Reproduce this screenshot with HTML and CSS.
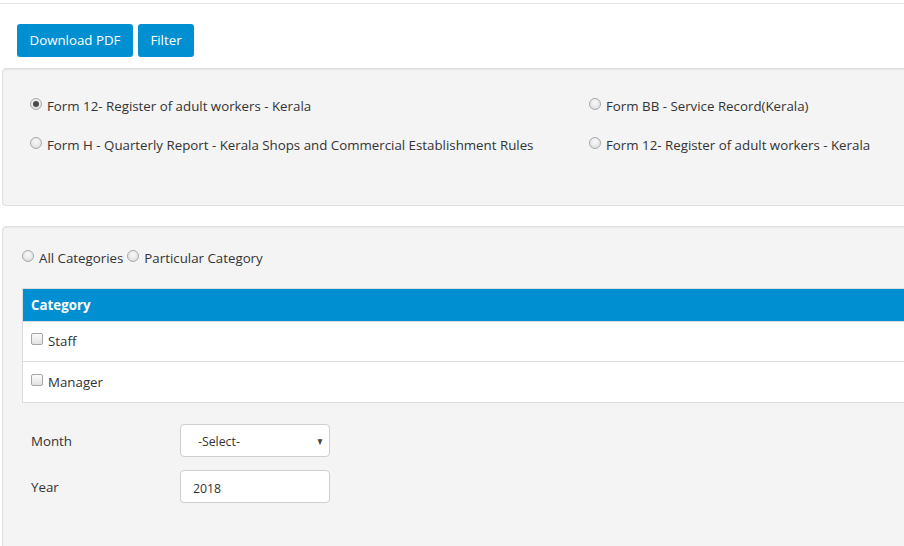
FILE: index.html
```html
<!DOCTYPE html>
<html>
<head>
<meta charset="utf-8">
<link rel="stylesheet" href="styles.css">
</head>
<body>
<div class="topbar"></div>
<div class="actions">
  <button class="btn">Download PDF</button>
  <button class="btn">Filter</button>
</div>
<div class="panel forms">
  <div class="form-grid">
    <label class="opt"><span class="radio checked"></span>Form 12- Register of adult workers - Kerala</label>
    <label class="opt"><span class="radio"></span>Form BB - Service Record(Kerala)</label>
    <label class="opt"><span class="radio"></span>Form H - Quarterly Report - Kerala Shops and Commercial Establishment Rules</label>
    <label class="opt"><span class="radio"></span>Form 12- Register of adult workers - Kerala</label>
  </div>
</div>
<div class="panel cats">
  <div class="cat-choice">
    <label class="opt small"><span class="radio"></span>All Categories</label>
    <label class="opt small"><span class="radio"></span>Particular Category</label>
  </div>
  <div class="table">
    <div class="thead">Category</div>
    <div class="row"><span class="check"></span>Staff</div>
    <div class="row"><span class="check"></span>Manager</div>
  </div>
  <div class="fields">
    <div class="field">
      <span class="flabel">Month</span>
      <div class="control select"><span>-Select-</span><span class="caret">&#9660;</span></div>
    </div>
    <div class="field">
      <span class="flabel">Year</span>
      <div class="control input">2018</div>
    </div>
  </div>
</div>
</body>
</html>
```
FILE: styles.css
```css
* { box-sizing: border-box; }
html, body { margin: 0; padding: 0; background: #fff; }
body {
  font-family: "Open Sans", "Segoe UI", sans-serif;
  font-size: 13.3px;
  color: #333;
  width: 904px;
  height: 546px;
  overflow: hidden;
}
.topbar { height: 4px; border-bottom: 1px solid #e6e6e6; }
.actions {
  display: flex;
  gap: 5px;
  padding: 20px 0 0 17px;
  height: 64px;
}
.btn {
  font-family: inherit;
  font-size: 13.3px;
  color: #fff;
  background: #0090d1;
  border: 0;
  border-radius: 3px;
  height: 33px;
  padding: 0 10px 1px;
  margin: 0;
}
.btn:first-child { width: 116px; }
.btn:last-child { width: 56px; }
.panel {
  margin-left: 2px;
  width: 920px;
  background: #f4f4f4;
  border: 1px solid #e0e0e0;
  border-radius: 4px;
  box-shadow: inset 0 1px 2px rgba(0,0,0,0.06);
}
.forms {
  height: 138px;
  padding: 27px 0 0 27px;
  margin-top: 0;
}
.form-grid {
  display: grid;
  grid-template-columns: 559px auto;
  row-gap: 19px;
}
.opt {
  display: flex;
  align-items: center;
  height: 20px;
  white-space: nowrap;
}
.radio {
  display: inline-block;
  width: 12px;
  height: 12px;
  border-radius: 50%;
  border: 1px solid #a9a9a9;
  background: radial-gradient(circle at 50% 35%, #fafafa 0%, #e6e6e6 60%, #d4d4d4 100%);
  margin-right: 5px;
  position: relative;
  top: -2px;
  flex: none;
}
.radio.checked::after {
  content: "";
  position: absolute;
  left: 2px; top: 2px;
  width: 6px; height: 6px;
  border-radius: 50%;
  background: #4a4a4a;
}
.cats {
  margin-top: 20px;
  height: 330px;
  padding: 21px 0 0 19px;
}
.cat-choice { display: flex; gap: 0; }
.cat-choice .opt { margin-right: 4px; }
.cat-choice .opt .radio { margin-right: 5px; }
.table {
  margin-top: 20px;
  border: 1px solid #dcdcdc;
  border-right: 0;
  background: #fff;
}
.thead {
  background: #0090d1;
  color: #fff;
  font-weight: 700;
  height: 33px;
  line-height: 32px;
  padding-left: 8px;
  border-bottom: 1px solid #dcdcdc;
}
.row {
  height: 40px;
  display: flex;
  align-items: center;
  padding-left: 8px;
  padding-bottom: 1px;
  border-bottom: 1px solid #dcdcdc;
}
.row:last-child { border-bottom: 0; }
.check {
  width: 12px;
  height: 12px;
  border: 1px solid #a6a6a6;
  border-radius: 2px;
  background: linear-gradient(#fbfbfb, #e2e2e2);
  margin-right: 5px;
  position: relative;
  top: -2px;
}
.fields {
  padding: 21px 0 0 9px;
  display: flex;
  flex-direction: column;
  gap: 13px;
}
.field { display: flex; align-items: center; }
.flabel { width: 149px; color: #333; }
.control {
  width: 150px;
  height: 33px;
  background: #fff;
  border: 1px solid #cfcfcf;
  border-radius: 4px;
  display: flex;
  align-items: center;
  font-size: 12.3px;
  color: #333;
  padding-top: 2px;
}
.select { padding-left: 17px; justify-content: space-between; }
.caret { font-size: 10px; color: #444; margin-right: 4px; transform: scaleX(0.8); margin-top: -2px; }
.input { padding-left: 12px; padding-top: 3px; }
```
